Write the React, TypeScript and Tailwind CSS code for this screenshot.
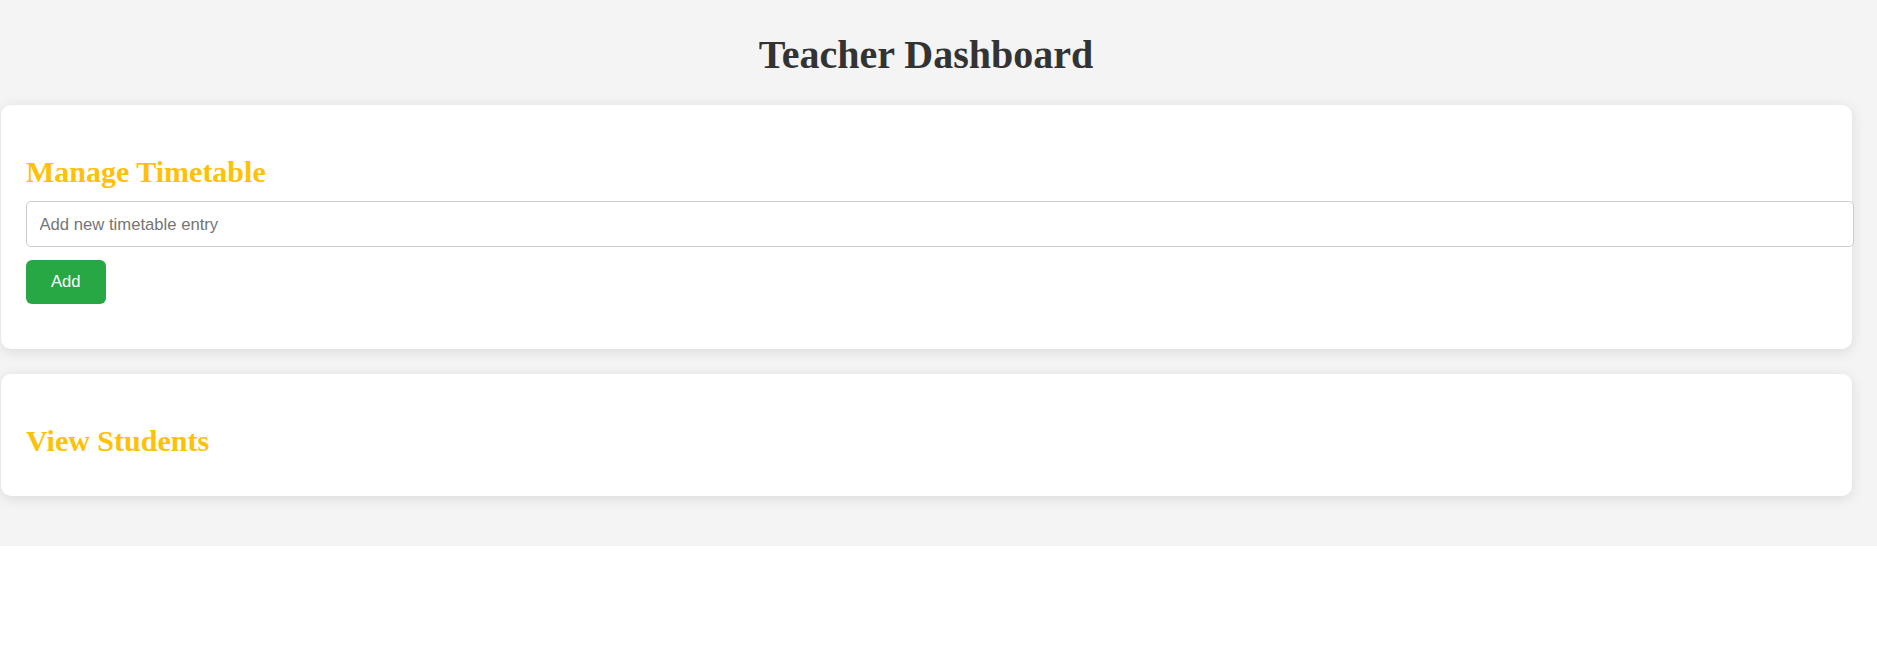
import React, { useState } from "react";

const TeacherDashboard: React.FC = () => {
  const [entry, setEntry] = useState("");
  const [timetable, setTimetable] = useState<string[]>([]);

  const handleAdd = () => {
    if (!entry.trim()) return;
    setTimetable([...timetable, entry]);
    setEntry("");
  };

  return (
    <div className="bg-[#f4f4f4] pt-[5px] pr-[25px] pb-[25px] font-['Liberation_Sans',Arial,sans-serif]">
      <h1 className="my-[27px] text-center text-[40px] font-bold leading-[46px] text-[#333] font-['Liberation_Serif','Times_New_Roman',serif]">
        Teacher Dashboard
      </h1>

      {/* Timetable card */}
      <div className="ml-[1px] mb-[25px] rounded-[10px] bg-white p-[25px] shadow-[0_2.5px_12.5px_rgba(0,0,0,0.1)]">
        <h2 className="mt-[25px] mb-[11.5px] text-[30px] font-bold leading-[34.5px] text-[#ffc107] font-['Liberation_Serif','Times_New_Roman',serif]">
          Manage Timetable
        </h2>
        <input
          type="text"
          value={entry}
          onChange={(e) => setEntry(e.target.value)}
          placeholder="Add new timetable entry"
          className="box-content block h-[19px] w-full rounded-[5px] border-[1.25px] border-[#ccc] bg-white px-[12.5px] py-[12.5px] text-[16.67px] leading-[19px] text-[#333] placeholder:text-[#757575] outline-none"
        />
        <button
          onClick={handleAdd}
          className="mt-[12.5px] block h-[44.5px] rounded-[6px] border-0 bg-[#28a745] px-[25px] text-[16.67px] leading-[19.5px] text-white hover:bg-[#218838]"
        >
          Add
        </button>
        <ul className="mt-[19px] mb-0 min-h-[1px]">
          {timetable.map((item, idx) => (
            <li key={idx}>{item}</li>
          ))}
        </ul>
      </div>

      {/* Students card */}
      <div className="ml-[1px] mb-[25px] rounded-[10px] bg-white p-[25px] shadow-[0_2.5px_12.5px_rgba(0,0,0,0.1)]">
        <h2 className="mt-[25px] mb-[12.5px] text-[30px] font-bold leading-[34.5px] text-[#ffc107] font-['Liberation_Serif','Times_New_Roman',serif]">
          View Students
        </h2>
      </div>
    </div>
  );
};

export default function App() {
  return <TeacherDashboard />;
}
